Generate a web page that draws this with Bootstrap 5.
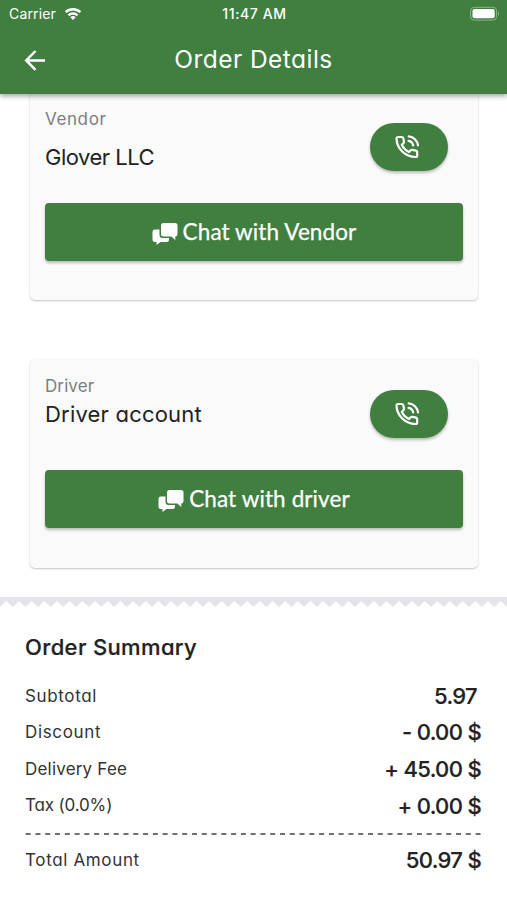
<!DOCTYPE html>
<html lang="en">
<head>
<meta charset="utf-8">
<meta name="viewport" content="width=device-width, initial-scale=1">
<title>Order Details</title>
<link href="https://cdn.jsdelivr.net/npm/bootstrap@5.3.0/dist/css/bootstrap.min.css" rel="stylesheet">
<style>
:root{--brand:#407f40}
body{font-family:Inter,"Liberation Sans",sans-serif;font-feature-settings:"cv11";color:#222;background:#fff;height:900px;overflow:hidden}
.app-header{height:94px;background:var(--brand);box-shadow:0 2px 5px rgba(0,0,0,.38);z-index:2}
.status-row{height:27px;font-size:14px;padding:0 7px 0 9px;font-feature-settings:normal}
.carrier{letter-spacing:.15px}
.clock{letter-spacing:.6px;margin-left:1px}
.title-row{height:66px}
.page-title{font-size:24.500px;line-height:64px;letter-spacing:.45px;padding-bottom:2px}
.contact-card{width:448px;margin-left:30px;background:#fafafa;border:0;border-radius:5px;box-shadow:0 1px 2px rgba(0,0,0,.24);padding:0 15px}
.vendor-card{height:211px;margin-top:-5px}
.driver-card{height:209px;margin-top:59px}
.contact-info{height:48px;margin-top:34px}
.driver-card .contact-info{margin-top:31px}
.contact-names{margin-top:-16px}
.role-label{font-size:17px;line-height:24px;color:#7c7e84;letter-spacing:.6px}
.driver-card .role-label{letter-spacing:.1px}
.party-name{font-size:22px;line-height:30px;letter-spacing:.2px;margin-top:1px}
.vendor-card .party-name{margin-top:11px;letter-spacing:-.5px}
.btn-brand,.btn-brand:hover{background:var(--brand);color:#fff;border:0;box-shadow:0 2px 3px rgba(0,0,0,.26)}
.call-btn{width:78px;height:48px;margin-right:15px}
.call-btn svg{margin-left:-5px}
.chat-btn{height:58px;margin-top:32px;border-radius:4px;font:400 22.500px/28px Lato,sans-serif;gap:5px;letter-spacing:.1px}
.chat-btn svg{margin-top:3px}
.chat-btn span{-webkit-text-stroke:.25px #fff}
.zigzag{width:507px;height:11px;margin-top:29px}
.summary{padding:23px 26px 0 25px}
.summary-title{font-size:22px;line-height:32px;font-weight:500;letter-spacing:.35px;-webkit-text-stroke:.2px #222}
.sum-list{margin-top:15px}
.sum-row{height:36.600px;font-size:17px;color:#333}
.amount{font-size:22px;font-weight:500;color:#222;letter-spacing:-.65px;-webkit-text-stroke:.2px #222}
.wide-1{letter-spacing:.65px}
.wide-2{letter-spacing:.2px}
.wide-3{letter-spacing:-.15px}
.dash-line{width:456px;height:2px;margin:9px 0 7px}
</style>
</head>
<body>
<svg class="d-none" aria-hidden="true">
  <symbol id="icon-call" viewBox="0 0 26 26"><path fill="none" stroke="#fff" stroke-width="2.200" stroke-linecap="round" stroke-linejoin="round" d="M4 3h3.800c.7 0 1.200.4 1.400 1.100l.8 3.400c.2.700 0 1.200-.5 1.600L7.800 10.700c1.500 3.300 3.800 5.600 7.300 7.300l1.600-1.700c.5-.5 1-.6 1.600-.5l3.800.8c.7.2 1.100.7 1.100 1.400v3.400c0 .9-.7 1.600-1.600 1.600C11 22.700 2.900 14.700 2.500 4.600 2.500 3.700 3.100 3 4 3zM14.700 2.300c4.900.5 8.700 4.200 9.300 9.100M14.500 6.800c2.700.4 4.300 2 4.700 4.600"/></symbol>
  <symbol id="icon-chat" viewBox="0 0 26 24"><path fill="#fff" d="M11.500 1H23q2.500 0 2.500 2.500v8.500q0 2.500-2.200 2.500v3.500l-4-3.500H11.500Q9 14.500 9 12V3.500Q9 1 11.500 1z"/><path fill="#fff" d="M2.800 7.500H7.500V13q0 3 3 3h6.500v1.500q0 2.500-2.500 2.500H8.500l-4 3V20H3Q.5 20 .5 17.500V9.900Q.5 7.500 2.800 7.500z"/></symbol>
</svg>
<header class="app-header position-relative text-white">
  <div class="status-row d-flex align-items-center justify-content-between position-relative">
    <div class="d-flex align-items-center"><span class="carrier">Carrier</span>
      <svg class="ms-2" width="18" height="14" viewBox="0 0 20 15" fill="none" stroke="#fff" stroke-width="2.700"><path d="M1.800 5.400a12 12 0 0 1 16.400 0M5 9a7.300 7.300 0 0 1 10 0"/><path d="M10 14.300l3-3.100a4.300 4.300 0 0 0-6 0z" fill="#fff" stroke="none"/></svg>
    </div>
    <span class="clock position-absolute start-50 translate-middle-x fw-medium text-nowrap">11:47 AM</span>
    <svg width="30" height="15" viewBox="0 0 30 15"><rect x=".6" y="1.300" width="26" height="12.800" rx="3.500" fill="none" stroke="#8db58c"/><rect x="2.500" y="3.100" width="22.200" height="9.200" rx="2" fill="#fff"/><path d="M28 5.500q2 2.200 0 4.400z" fill="#8db58c"/></svg>
  </div>
  <div class="title-row d-flex align-items-center justify-content-center position-relative">
    <svg class="position-absolute top-50 start-0 translate-middle-y ms-4" width="22" height="22" viewBox="0 0 22 22" fill="none" stroke="#fff" stroke-width="2.500"><path d="M21 11.500H2.500M11.500 2L2.200 11.500l9.300 9.300"/></svg>
    <h1 class="page-title m-0 fw-normal">Order Details</h1>
  </div>
</header>
<main>
  <section class="card contact-card vendor-card">
    <div class="contact-info d-flex justify-content-between align-items-start">
      <div class="contact-names"><div class="role-label">Vendor</div><div class="party-name">Glover LLC</div></div>
      <button class="btn btn-brand call-btn rounded-pill p-0 d-flex align-items-center justify-content-center" aria-label="Call vendor"><svg width="26" height="26"><use href="#icon-call"/></svg></button>
    </div>
    <button class="btn btn-brand chat-btn w-100 p-0 d-flex align-items-center justify-content-center"><svg width="26" height="24"><use href="#icon-chat"/></svg><span>Chat with Vendor</span></button>
  </section>
  <section class="card contact-card driver-card">
    <div class="contact-info d-flex justify-content-between align-items-start">
      <div class="contact-names"><div class="role-label">Driver</div><div class="party-name">Driver account</div></div>
      <button class="btn btn-brand call-btn rounded-pill p-0 d-flex align-items-center justify-content-center" aria-label="Call driver"><svg width="26" height="26"><use href="#icon-call"/></svg></button>
    </div>
    <button class="btn btn-brand chat-btn w-100 p-0 d-flex align-items-center justify-content-center"><svg width="26" height="24"><use href="#icon-chat"/></svg><span>Chat with driver</span></button>
  </section>
  <svg class="zigzag d-block" viewBox="0 0 507 11"><defs><pattern id="tooth" width="12.675" height="11" patternUnits="userSpaceOnUse"><path d="M0 0H12.675V10L6.340 4 0 10z" fill="#e3e4e7"/></pattern></defs><rect width="507" height="11" fill="url(#tooth)"/></svg>
  <section class="summary">
    <h2 class="summary-title mb-0">Order Summary</h2>
    <div class="sum-list">
      <div class="sum-row d-flex justify-content-between align-items-center"><span class="wide-1">Subtotal</span><span class="amount me-1">5.97</span></div>
      <div class="sum-row d-flex justify-content-between align-items-center"><span class="wide-1">Discount</span><span class="amount">- 0.00 $</span></div>
      <div class="sum-row d-flex justify-content-between align-items-center"><span class="wide-2">Delivery Fee</span><span class="amount">+ 45.00 $</span></div>
      <div class="sum-row d-flex justify-content-between align-items-center"><span class="wide-3">Tax (0.0%)</span><span class="amount">+ 0.00 $</span></div>
      <svg class="dash-line d-block" viewBox="0 0 456 2"><path d="M.7 1H456" stroke="#6f6f6f" stroke-width="2" stroke-dasharray="5 4.780"/></svg>
      <div class="sum-row d-flex justify-content-between align-items-center"><span class="wide-1">Total Amount</span><span class="amount">50.97 $</span></div>
    </div>
  </section>
</main>
<script src="https://cdn.jsdelivr.net/npm/bootstrap@5.3.0/dist/js/bootstrap.bundle.min.js"></script>
</body>
</html>
